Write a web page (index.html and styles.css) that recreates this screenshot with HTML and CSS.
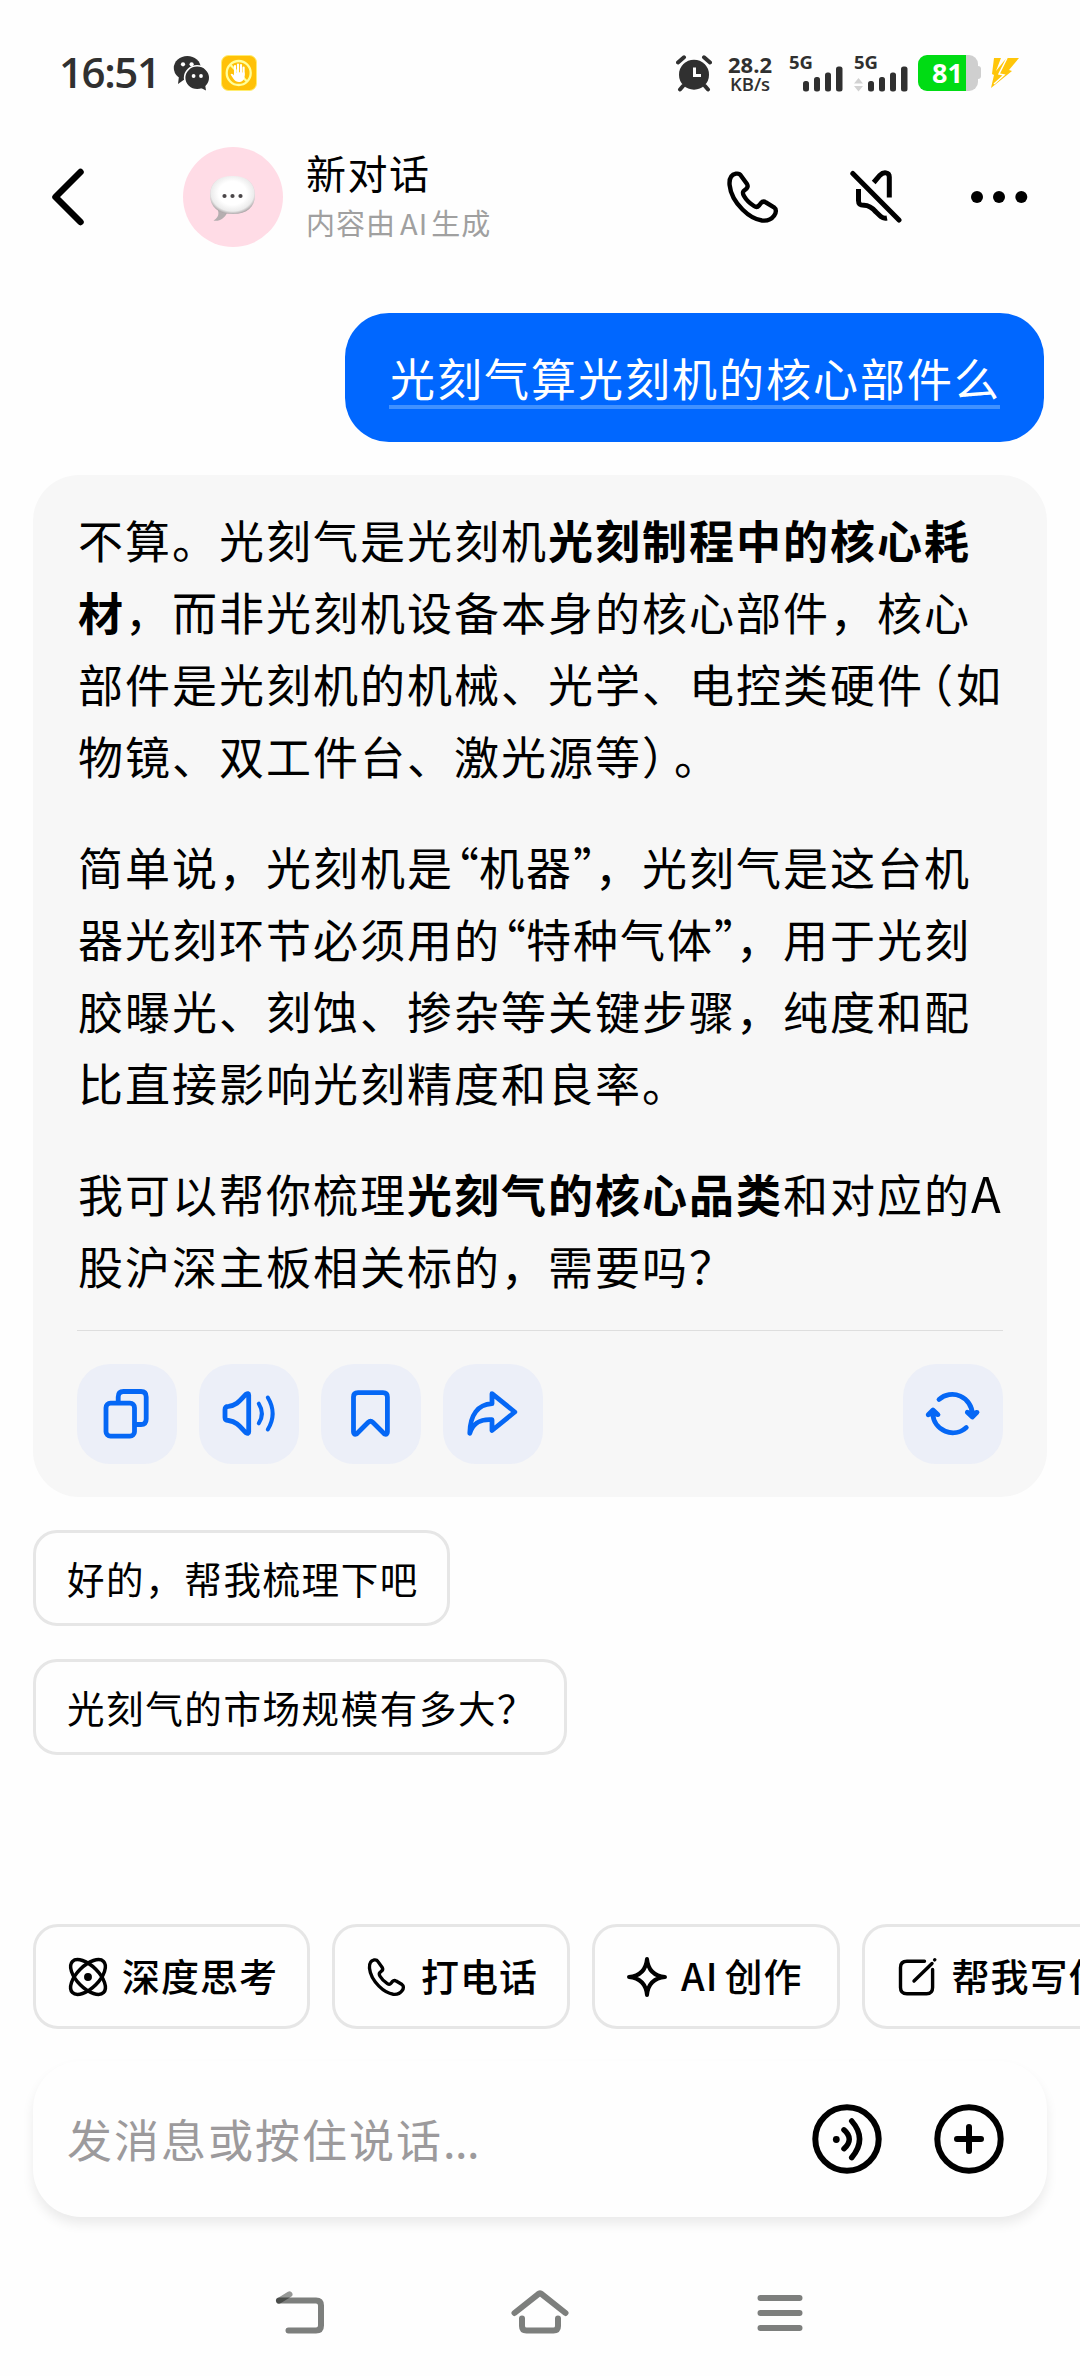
FILE: index.html
```html
<!DOCTYPE html>
<html lang="zh-CN">
<head>
    <meta charset="utf-8">
    <title>新对话</title>
    <link rel="stylesheet" href="styles.css">
</head>
<body>
    <div class="status">
        <span class="time">16:51</span>
        <svg class="wechat" width="36" height="36" viewBox="0 0 36 36">
            <path d="M6 21 L5 29 L12 24Z" fill="#303030"/>
            <ellipse cx="14.3" cy="13" rx="13.5" ry="12" fill="#303030"/>
            <ellipse cx="24.2" cy="22.8" rx="12.6" ry="12" fill="#303030" stroke="#fff" stroke-width="1.6"/>
            <path d="M26 32 L33 35.5 L32 29Z" fill="#303030"/>
            <g fill="#fff"><circle cx="10" cy="9.3" r="2.1"/><circle cx="18.6" cy="9.3" r="2.1"/><circle cx="20.6" cy="21" r="1.9"/><circle cx="28" cy="21" r="1.9"/></g>
        </svg>
        <svg class="hand" width="36" height="36" viewBox="0 0 36 36">
            <rect x=".5" y=".5" width="35" height="35" rx="7" fill="#ffc107" stroke="#ffed70"/>
            <circle cx="17.7" cy="18" r="12" fill="none" stroke="#ffff9c" stroke-width="2.3"/>
            <path d="M9 9.5 L26 26.5" stroke="#ffff9c" stroke-width="2.3"/>
            <path d="M14 20V11M17 20V9.500M20 20V10M22.600 20V12.500" stroke="#fff" stroke-width="2.100" stroke-linecap="round"/>
            <path d="M13 17.500h10.600v4c0 6-8 7.500-11 2.500l-3-4.500c1-1.500 2.400-.5 3.400 1z" fill="#fff"/>
        </svg>
        <div class="status-right">
            <svg width="36" height="37" viewBox="0 0 36 37">
                <circle cx="18" cy="19.700" r="15" fill="#303030"/>
                <path d="M2 7.500L8 2.300M28 2.300L34 7.500M7 31L4 34.500M29 31l3 3.500" stroke="#303030" stroke-width="4" stroke-linecap="round"/>
                <path d="M18.500 12.500V20.500H25" fill="none" stroke="#fff" stroke-width="3"/>
            </svg>
            <div class="speed"><b>28.2</b><span>KB/s</span></div>
            <div class="signal">
                <span>5G</span>
                <svg width="56" height="37" viewBox="0 0 56 37" fill="#303030">
                    <rect x="15" y="26" width="6" height="10.500" rx="2.500"/><rect x="26" y="22" width="6" height="14.500" rx="2.500"/><rect x="37" y="17.500" width="6" height="19" rx="2.500"/><rect x="48" y="11.500" width="6.500" height="25" rx="2.500"/>
                </svg>
            </div>
            <div class="signal second">
                <span>5G</span>
                <svg width="56" height="37" viewBox="0 0 56 37" fill="#303030">
                    <path d="M1 28.500L5.500 23L10 28.500ZM1 31L5.500 36.500L10 31Z" fill="#d2d2d2"/>
                    <rect x="15" y="26" width="6" height="10.500" rx="2.500"/><rect x="26" y="22" width="6" height="14.500" rx="2.500"/><rect x="37" y="17.500" width="6" height="19" rx="2.500"/><rect x="48" y="11.500" width="6.500" height="25" rx="2.500"/>
                </svg>
            </div>
            <div class="battery"><i></i><b>81</b></div>
            <svg class="bolt" width="30" height="32" viewBox="0 0 30 32" fill="#ffc60a">
                <path d="M4 1H11L6 14L14 4L17 1H29L19 13L22 14L1 31L4 18L2 17Z"/>
                <path d="M17 1L9 17L14 18L4 27" fill="none" stroke="#fff" stroke-width="1.500"/>
            </svg>
        </div>
    </div>

    <header class="header">
        <svg class="back" width="40" height="60" viewBox="0 0 40 60"><path d="M31.500 5L6.500 30L31.500 55" class="line" stroke-width="6.500"/></svg>
        <div class="avatar">
            <svg width="48" height="50" viewBox="0 0 48 50">
                <defs>
                    <radialGradient id="shine" cx="50%" cy="45%" r="56%">
                        <stop offset=".55" stop-color="#fff"/>
                        <stop offset=".85" stop-color="#ececec"/>
                        <stop offset="1" stop-color="#a9a3a5"/>
                    </radialGradient>
                </defs>
                <path d="M8 34C11 40 9 44 4.500 46.500C10 48 16 44 18 39Z" fill="#b5aeb0"/>
                <path d="M23.500 2C38 2 46 9 46 21C46 33 38 40 24 40C9 40 1 33 1 21C1 9 9 2 23.500 2Z" fill="url(#shine)"/>
                <g fill="#4a4648"><circle cx="15.500" cy="22" r="2.100"/><circle cx="23.500" cy="22" r="2.100"/><circle cx="31.500" cy="22" r="2.100"/></g>
            </svg>
        </div>
        <div class="title">
            <h1>新对话</h1>
            <p>内容由<span class="latin">AI</span>生成</p>
        </div>
        <div class="header-icons">
            <svg width="58" height="52" viewBox="0 0 58 52"><path class="line" stroke-width="4.400" d="M5.600 14C5 7 8 3.500 12 2.700C14.500 2.300 16 3 17 4.700L23 13C24 14.800 23.800 16.300 22.500 17.600L19.500 20.200C18.400 21.500 18.900 23 20 25C22 28.500 26 32.500 30 35C32 36.300 33.500 36.300 35 34.500L37 32C38.500 30.300 40.500 30.500 42 31.500L50 36.300C52.500 38 52.500 41.500 50 44.800C47 49 42.500 50 38 49.500C31 48.500 25 45 18.500 38.500C11 31 6.500 23 5.600 14Z"/></svg>
            <svg width="52" height="54" viewBox="0 0 52 54"><path class="line" stroke-width="5" d="M2.800 3.500L49 50"/><path class="line cut" stroke-width="5" d="M23.700 12.500L30 5.200C33.500 1.600 39.300 2 39.300 7V27.500M8.500 19V30.500C8.500 34.500 10.500 35.300 14 35.300C19 35.300 22.500 38 26 42L31 46.700C32.500 48 34 48.600 37 48"/></svg>
            <svg width="58" height="14" viewBox="0 0 58 14"><circle cx="7" cy="7" r="6"/><circle cx="29" cy="7" r="6"/><circle cx="51.300" cy="7" r="6"/></svg>
        </div>
    </header>

    <main class="chat">
        <div class="question"><span>光刻气算光刻机的核心部件么</span></div>

        <section class="answer">
            <p>不算。光刻气是光刻机<b>光刻制程中的核心耗</b><br><b>材</b>，而非光刻机设备本身的核心部件，核心<br>部件是光刻机的机械、光学、电控类硬件<span class="paren open">（</span>如<br>物镜、双工件台、激光源等<span class="paren">）</span>。</p>
            <p>简单说，光刻机是<span class="quote">“</span>机器<span class="quote close">”</span>，光刻气是这台机<br>器光刻环节必须用的<span class="quote">“</span>特种气体<span class="quote close">”</span>，用于光刻<br>胶曝光、刻蚀、掺杂等关键步骤，纯度和配<br>比直接影响光刻精度和良率。</p>
            <p>我可以帮你梳理<b>光刻气的核心品类</b>和对应的<span class="a">A</span><br>股沪深主板相关标的，需要吗？</p>
            <div class="actions">
                <button><svg viewBox="0 0 100 100"><rect x="29" y="39.200" width="28.500" height="33" rx="4.500"/><path d="M41.200 38V33Q41.200 27.500 46.500 27.500H64Q69.200 27.500 69.200 33V55Q69.200 60.500 64 60.500H58"/></svg></button>
                <button><svg viewBox="0 0 100 100"><path d="M26 45.500Q26 42.300 29.500 42.300C38.500 41.500 42 35 47 30.300Q49.700 28.500 49.700 31V68Q49.700 70.500 47 68.700C42 64 38.500 57.500 29.500 56.500Q26 56.300 26 53.500Z"/><path d="M59.800 39.700Q66 49.500 59.800 59.300M68.800 33.500Q78.500 49.500 68.800 65.500" stroke-width="4"/></svg></button>
                <button><svg viewBox="0 0 100 100"><path d="M32.500 33Q32.500 28.700 37 28.700H62Q66.400 28.700 66.400 33V68Q66.400 71 63.500 70L52 58.500Q49.500 56 47 58.500L35.500 70Q32.500 71 32.500 68Z"/></svg></button>
                <button><svg viewBox="0 0 100 100"><path d="M26.800 69.300C27 51 35 40.500 49 39.700V29.700L71.800 48L49 66.500V55.700C38 55 30.500 58 26.800 69.300Z"/></svg></button>
                <button class="redo"><svg viewBox="0 0 100 100"><path d="M36 35.500A20 20 0 0 1 69.300 50M63.300 63.500A20 20 0 0 1 29.800 50"/><path d="M64.300 48.300L69.300 53L74 48.300L69 50ZM25.200 50.700L30 46L35 50.700L30 49Z"/></svg></button>
            </div>
        </section>

        <div class="suggest">好的，帮我梳理下吧</div>
        <div class="suggest">光刻气的市场规模有多大？</div>
    </main>

    <div class="tools">
        <div class="tool">
            <svg viewBox="0 0 44 44" stroke-width="3.500"><ellipse cx="22" cy="22" rx="22" ry="11" transform="rotate(45 22 22)"/><ellipse cx="22" cy="22" rx="22" ry="11" transform="rotate(-45 22 22)"/><circle cx="22" cy="22" r="2.200" fill="#000"/></svg>
            <span>深度思考</span>
        </div>
        <div class="tool">
            <svg viewBox="-.500 -4 60 60" stroke-width="4.600"><path d="M5.600 14C5 7 8 3.500 12 2.700C14.500 2.300 16 3 17 4.700L23 13C24 14.800 23.800 16.300 22.500 17.600L19.500 20.200C18.400 21.500 18.900 23 20 25C22 28.500 26 32.500 30 35C32 36.300 33.500 36.300 35 34.500L37 32C38.500 30.300 40.500 30.500 42 31.500L50 36.300C52.500 38 52.500 41.500 50 44.800C47 49 42.500 50 38 49.500C31 48.500 25 45 18.500 38.500C11 31 6.500 23 5.600 14Z"/></svg>
            <span>打电话</span>
        </div>
        <div class="tool create">
            <svg viewBox="0 0 44 44" stroke-width="4"><path d="M22 4C23 15 29 21 40 22C29 23 23 29 22 40C21 29 15 23 4 22C15 21 21 15 22 4Z"/></svg>
            <span><span class="latin">AI</span>创作</span>
        </div>
        <div class="tool">
            <svg viewBox="0 0 44 44" stroke-width="3.400"><path d="M29.500 6.200H12Q5.500 6.200 5.500 12.500V32.500Q5.500 38.700 12 38.700H31.500Q37.600 38.700 37.600 32.500V14.500M19 26L37 8.500M39.600 4.900L39.800 4.700"/></svg>
            <span>帮我写作</span>
        </div>
    </div>

    <div class="input">
        <span>发消息或按住说话<i>...</i></span>
        <svg width="70" height="70" viewBox="0 0 70 70"><circle class="line" cx="35" cy="35" r="31.700" stroke-width="6"/><circle cx="24.300" cy="35.500" r="3.400"/><path class="line" stroke-width="5.500" d="M32 25.900Q42.500 35 32 44.700M39.700 17Q55.500 35 39.700 53.600"/></svg>
        <svg width="70" height="70" viewBox="0 0 70 70"><circle class="line" cx="35" cy="35" r="31.700" stroke-width="6"/><path class="line" stroke-width="6" d="M23 35H47M35 23V47"/></svg>
    </div>

    <nav class="nav">
        <svg width="60" height="60" viewBox="0 0 60 60"><path d="M9 23.500H46Q51 23.500 51 28.500V48.500Q51 53.500 46 53.500H18.500"/><path d="M9 23.800L19.500 17.300" opacity=".8"/></svg>
        <svg width="60" height="60" viewBox="0 0 60 60"><path d="M4.500 36L28 17.300Q30 15.500 32 17.300L55.500 36M12 41.500V49Q12 53.500 16.500 53.500H43.500Q48 53.500 48 49V41.500"/></svg>
        <svg width="60" height="60" viewBox="0 0 60 60"><path d="M10.500 21H49.500M10.500 36H49.500M10.500 51H49.500"/></svg>
    </nav>
</body>
</html>
```

FILE: styles.css
```css
*{
    box-sizing: border-box;
}
body{
    margin: 0;
    width: 1080px;
    height: 2376px;
    display: flex;
    flex-direction: column;
    background: #fefefe;
    color: #000;
    font-family: "Noto Sans CJK SC", sans-serif;
    overflow: hidden;
}
h1, p{
    margin: 0;
    font-weight: 400;
}
svg{
    display: block;
    flex: none;
}
.line{
    fill: none;
    stroke: #000;
    stroke-linecap: round;
    stroke-linejoin: round;
}
.cut{
    stroke-linecap: butt;
}

/* status bar */
.status{
    height: 146px;
    padding: 0 60px 0 59px;
    display: flex;
    align-items: center;
    color: #303030;
    font-family: "Open Sans", "Noto Sans", sans-serif;
}
.time{
    width: 114px;
    margin-top: -3px;
    font-size: 42px;
    font-weight: 650;
    letter-spacing: -1.4px;
}
.hand{
    margin-left: 12px;
}
.status-right{
    margin-left: auto;
    display: flex;
    align-items: center;
}
.speed{
    width: 50px;
    margin: -1px 0 0 13px;
    display: flex;
    flex-direction: column;
    align-items: center;
    font-size: 18.5px;
    line-height: 17px;
    font-weight: 600;
}
.speed b{
    font-size: 22px;
    line-height: 21px;
    font-weight: 700;
}
.signal{
    position: relative;
    margin-left: 13px;
}
.second{
    margin-left: 9px;
}
.signal span{
    position: absolute;
    left: 1px;
    top: -4px;
    font-size: 18.5px;
    line-height: 22px;
    font-weight: 700;
}
.battery{
    position: relative;
    width: 60px;
    height: 36px;
    margin-left: 9px;
    border-radius: 9px;
    background: linear-gradient(90deg, #00dc14 48px, #cfcfcf 48px);
    text-align: center;
}
.battery i{
    position: absolute;
    right: -3px;
    top: 11px;
    width: 4px;
    height: 13px;
    border-radius: 0 3px 3px 0;
    background: #cfcfcf;
}
.battery b{
    display: block;
    color: #fff;
    font-size: 27px;
    line-height: 36px;
    padding-right: 1px;
}
.bolt{
    margin-left: 12px;
}

/* header */
.header{
    height: 102px;
    padding: 0 52px 0 49px;
    display: flex;
    align-items: center;
}
.avatar{
    width: 100px;
    height: 100px;
    margin-left: 94px;
    padding-top: 3px;
    border-radius: 50%;
    background: #ffdce6;
    display: flex;
    align-items: center;
    justify-content: center;
}
.title{
    margin: -3px 0 0 23px;
}
.title h1{
    font-size: 40px;
    line-height: 53px;
    letter-spacing: 1.5px;
}
.title p{
    font-size: 29px;
    line-height: 46px;
    letter-spacing: 1px;
    color: #a0a0a0;
}
.title .latin{
    margin: 0 3px 0 4px;
}
.header-icons{
    margin-left: auto;
    display: flex;
    align-items: center;
    gap: 68px;
}

/* conversation */
.chat{
    padding: 65px 33px 0;
    display: flex;
    flex-direction: column;
    align-items: flex-start;
    white-space: nowrap;
}
.question{
    align-self: flex-end;
    width: 699px;
    height: 129px;
    margin: 0 3px 33px 0;
    padding: 30px 44px;
    border-radius: 44px;
    background: #0067ff;
    color: #fff;
    font-size: 45px;
    line-height: 70px;
    letter-spacing: 2px;
}
.question span{
    display: block;
    height: 66px;
    padding-left: 1px;
    border-bottom: 4px solid #4191ff;
}
.answer{
    width: 1014px;
    height: 1022px;
    padding: 29px 44px 33px;
    border-radius: 46px;
    background: #f7f7f7;
    font-size: 45px;
    line-height: 72px;
    letter-spacing: 2px;
    margin-bottom: 33px;
}
.answer p{
    padding-left: 1px;
}
.answer p + p{
    margin-top: 39px;
}
.paren, .quote{
    display: inline-block;
    width: 32px;
    letter-spacing: 0;
    font-feature-settings: "halt";
}
.open{
    text-align: right;
    padding-right: 3px;
}
.quote{
    width: 25px;
    text-align: right;
}
.close{
    width: 22px;
    text-align: left;
}
.a{
    font-size: 49px;
    line-height: 1;
}
.actions{
    margin-top: 28px;
    padding-top: 33px;
    border-top: 1px solid #dedede;
    display: flex;
    gap: 22px;
}
.actions button{
    width: 100px;
    height: 100px;
    padding: 0;
    border: 0;
    border-radius: 33px;
    background: #eceff8;
}
.actions svg{
    fill: none;
    stroke: #0567f5;
    stroke-width: 4.8;
    stroke-linecap: round;
    stroke-linejoin: round;
}
.actions .redo{
    margin-left: auto;
}
.suggest{
    height: 96px;
    margin-bottom: 33px;
    padding: 0 28px 0 31px;
    border: 3px solid #e6e6e6;
    border-radius: 24px;
    font-size: 37.5px;
    line-height: 90px;
    letter-spacing: 1.6px;
}

/* bottom area */
.tools{
    margin-top: auto;
    padding-left: 33px;
    display: flex;
    gap: 22px;
    white-space: nowrap;
    overflow: hidden;
}
.tool{
    flex: none;
    height: 105px;
    padding: 0 29px 0 30px;
    border: 3px solid #e6e6e6;
    border-radius: 25px;
    display: flex;
    align-items: center;
    gap: 12px;
    font-size: 38px;
    font-weight: 500;
    line-height: 94px;
    letter-spacing: 1px;
}
.create{
    padding-right: 35px;
}
.tool > span{
    margin-top: -4px;
}
.tool svg{
    width: 44px;
    height: 44px;
    fill: none;
    stroke: #000;
    stroke-linecap: round;
    stroke-linejoin: round;
}
.tool .latin{
    margin-right: 6px;
}
.input{
    height: 156px;
    margin: 32px 33px 33px;
    padding: 0 43px 0 34px;
    border-radius: 48px;
    background: #fefefe;
    box-shadow: 0 7px 12px rgba(0,0,0,.08);
    display: flex;
    align-items: center;
    gap: 52px;
    color: #9c9a9c;
    font-size: 45px;
    letter-spacing: 2px;
}
.input span{
    margin: -1px auto 0 0;
}
.input i{
    font-style: normal;
    letter-spacing: -.5px;
}
.nav{
    height: 126px;
    padding: 0 270px 12px;
    display: flex;
    align-items: center;
    justify-content: space-between;
}
.nav svg{
    fill: none;
    stroke: rgba(0,4,0,.51);
    stroke-width: 6;
    stroke-linecap: round;
    stroke-linejoin: round;
}
```
